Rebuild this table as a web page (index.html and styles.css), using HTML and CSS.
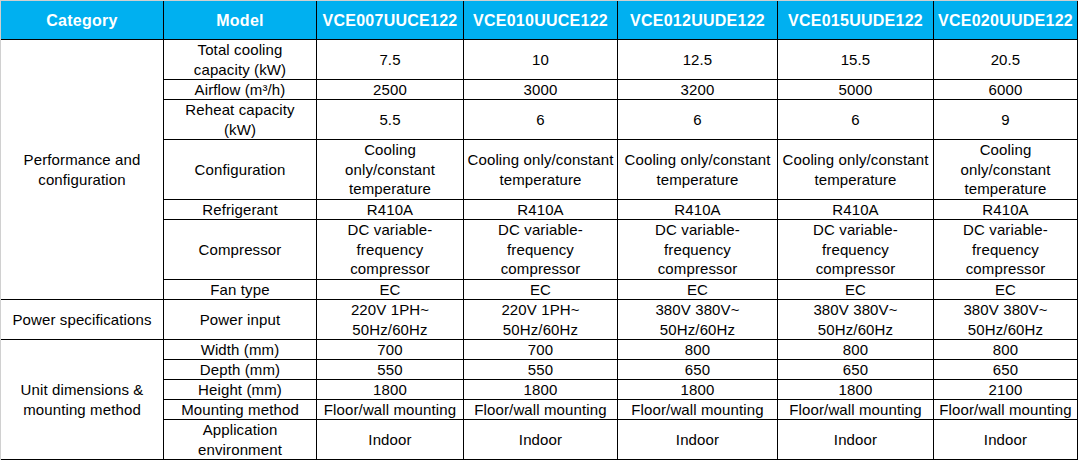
FILE: index.html
```html
<!DOCTYPE html>
<html lang="en">
<head>
<meta charset="utf-8">
<title>Specifications</title>
<link rel="stylesheet" href="styles.css">
</head>
<body>
<table class="spec">
  <thead>
    <tr class="head">
      <th class="c1">Category</th>
      <th class="c2">Model</th>
      <th class="c3">VCE007UUCE122</th>
      <th class="c4">VCE010UUCE122</th>
      <th class="c5">VCE012UUDE122</th>
      <th class="c6">VCE015UUDE122</th>
      <th class="c7">VCE020UUDE122</th>
    </tr>
  </thead>
  <tbody>
    <tr class="r2">
      <td rowspan="7">Performance and<br>configuration</td>
      <td>Total cooling<br>capacity (kW)</td>
      <td>7.5</td><td>10</td><td>12.5</td><td>15.5</td><td>20.5</td>
    </tr>
    <tr class="r1">
      <td>Airflow (m³/h)</td>
      <td>2500</td><td>3000</td><td>3200</td><td>5000</td><td>6000</td>
    </tr>
    <tr class="r2">
      <td>Reheat capacity<br>(kW)</td>
      <td>5.5</td><td>6</td><td>6</td><td>6</td><td>9</td>
    </tr>
    <tr class="r3">
      <td>Configuration</td>
      <td>Cooling<br>only/constant<br>temperature</td>
      <td>Cooling only/constant<br>temperature</td>
      <td>Cooling only/constant<br>temperature</td>
      <td>Cooling only/constant<br>temperature</td>
      <td>Cooling<br>only/constant<br>temperature</td>
    </tr>
    <tr class="r1">
      <td>Refrigerant</td>
      <td>R410A</td><td>R410A</td><td>R410A</td><td>R410A</td><td>R410A</td>
    </tr>
    <tr class="r3">
      <td>Compressor</td>
      <td>DC variable-<br>frequency<br>compressor</td>
      <td>DC variable-<br>frequency<br>compressor</td>
      <td>DC variable-<br>frequency<br>compressor</td>
      <td>DC variable-<br>frequency<br>compressor</td>
      <td>DC variable-<br>frequency<br>compressor</td>
    </tr>
    <tr class="r1">
      <td>Fan type</td>
      <td>EC</td><td>EC</td><td>EC</td><td>EC</td><td>EC</td>
    </tr>
    <tr class="r2">
      <td>Power specifications</td>
      <td>Power input</td>
      <td>220V 1PH~<br>50Hz/60Hz</td>
      <td>220V 1PH~<br>50Hz/60Hz</td>
      <td>380V 380V~<br>50Hz/60Hz</td>
      <td>380V 380V~<br>50Hz/60Hz</td>
      <td>380V 380V~<br>50Hz/60Hz</td>
    </tr>
    <tr class="r1">
      <td rowspan="5" class="tall">Unit dimensions &amp;<br>mounting method</td>
      <td>Width (mm)</td>
      <td>700</td><td>700</td><td>800</td><td>800</td><td>800</td>
    </tr>
    <tr class="r1">
      <td>Depth (mm)</td>
      <td>550</td><td>550</td><td>650</td><td>650</td><td>650</td>
    </tr>
    <tr class="r1">
      <td>Height (mm)</td>
      <td>1800</td><td>1800</td><td>1800</td><td>1800</td><td>2100</td>
    </tr>
    <tr class="r1">
      <td>Mounting method</td>
      <td>Floor/wall mounting</td><td>Floor/wall mounting</td><td>Floor/wall mounting</td><td>Floor/wall mounting</td><td>Floor/wall mounting</td>
    </tr>
    <tr class="r2">
      <td>Application<br>environment</td>
      <td>Indoor</td><td>Indoor</td><td>Indoor</td><td>Indoor</td><td>Indoor</td>
    </tr>
  </tbody>
</table>
</body>
</html>
```

FILE: styles.css
```css
html, body {
  margin: 0;
  padding: 0;
  background: #ffffff;
}

.spec {
  width: 1078px;
  table-layout: fixed;
  border-collapse: separate;
  border-spacing: 0;
  border-left: 1px solid #d0d0d0;
  border-top: 1px solid #d0d0d0;
  font-family: "Liberation Sans", Arial, sans-serif;
  font-size: 15px;
  letter-spacing: 0.12px;
  color: #000000;
}

.spec th,
.spec td {
  box-sizing: border-box;
  padding: 0;
  border-right: 1px solid #000000;
  border-bottom: 1px solid #000000;
  text-align: center;
  vertical-align: middle;
  white-space: nowrap;
  line-height: 19px;
}

.head th {
  height: 39px;
  background: #00b0f0;
  color: #ffffff;
  font-weight: bold;
  font-size: 16px;
  letter-spacing: 0.25px;
}

.c1 { width: 163px; }
.c2 { width: 153px; }
.c3 { width: 147px; }
.c4 { width: 154px; }
.c5 { width: 160px; }
.c6 { width: 156px; }
.c7 { width: 144px; }

.r1 td { height: 20px; }
.r2 td { height: 40px; line-height: 19.5px; }
.r3 td { height: 60px; line-height: 19.6px; }
.spec td.tall { line-height: 19.5px; }
```
